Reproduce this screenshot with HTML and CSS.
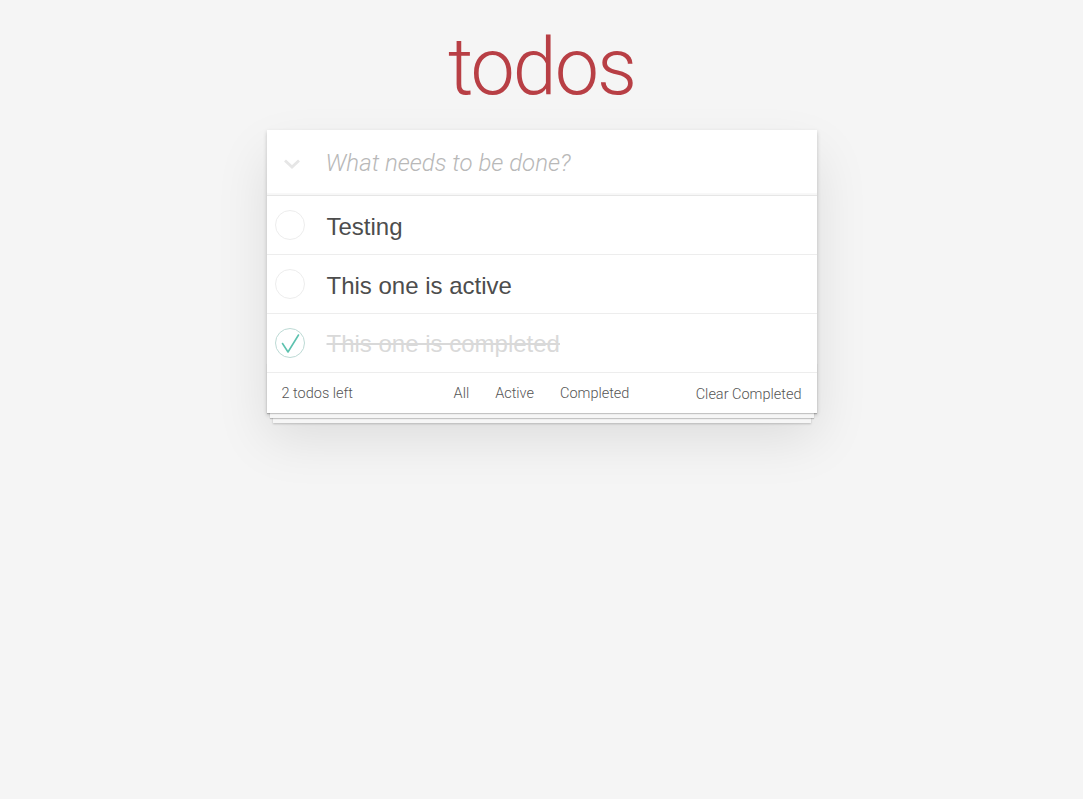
FILE: index.html
```html
<!DOCTYPE html>
<html lang="en">
<head>
<meta charset="utf-8">
<title>todos</title>
<link rel="stylesheet" href="styles.css">
</head>
<body>
<main class="page">
  <h1 class="title">todos</h1>
  <section class="todoapp">
    <header class="new-row">
      <span class="toggle-all">
        <svg width="16" height="10" viewBox="0 0 16 10"><path d="M1 1.5 L8 8 L15 1.5" fill="none" stroke="#e6e6e6" stroke-width="2.8" stroke-linejoin="miter"/></svg>
      </span>
      <span class="new-todo">What needs to be done?</span>
    </header>
    <ul class="todo-list">
      <li class="todo">
        <span class="toggle"></span>
        <span class="label">Testing</span>
      </li>
      <li class="todo">
        <span class="toggle"></span>
        <span class="label">This one is active</span>
      </li>
      <li class="todo completed">
        <span class="toggle done">
          <svg width="30" height="30" viewBox="0 0 30 30"><path d="M7.5 15.5 L13 24 L23.5 7" fill="none" stroke="#5dc2af" stroke-width="1.6" stroke-linecap="round" stroke-linejoin="round"/></svg>
        </span>
        <span class="label">This one is completed</span>
      </li>
    </ul>
    <footer class="footer">
      <span class="count">2 todos left</span>
      <nav class="filters">
        <a class="filter">All</a>
        <a class="filter">Active</a>
        <a class="filter">Completed</a>
      </nav>
      <span class="clear">Clear Completed</span>
    </footer>
  </section>
</main>
</body>
</html>
```

FILE: styles.css
```css
* { box-sizing: border-box; }

html, body {
  margin: 0;
  padding: 0;
}

body {
  background: #f5f5f5;
  font-family: "Liberation Sans", Arial, sans-serif;
  color: #4d4d4d;
  min-height: 100vh;
  -webkit-font-smoothing: antialiased;
}

.page {
  width: 550px;
  margin: 0 auto;
  padding-top: 27px;
  padding-bottom: 40px;
  display: flex;
  flex-direction: column;
}

.title {
  margin: 0 0 23px;
  height: 80px;
  font-family: Roboto, "Liberation Sans", sans-serif;
  font-weight: 300;
  font-size: 79px;
  letter-spacing: -2px;
  line-height: 80px;
  text-align: center;
  color: #b83f45;
}

.todoapp {
  position: relative;
  background: #fff;
  box-shadow: 0 2px 4px 0 rgba(0, 0, 0, 0.2), 0 25px 50px 0 rgba(0, 0, 0, 0.1);
}

.new-row {
  display: flex;
  align-items: center;
  height: 65px;
  box-shadow: inset 0 -2px 1px rgba(0, 0, 0, 0.03);
}

.toggle-all {
  width: 59px;
  flex: none;
  display: flex;
  padding-left: 17px;
  padding-top: 3px;
}

.toggle-all svg { display: block; }

.new-todo {
  font-family: Roboto, "Liberation Sans", sans-serif;
  font-weight: 300;
  font-style: italic;
  font-size: 24px;
  color: #b8b8b8;
}

.todo-list {
  list-style: none;
  margin: 0;
  padding: 0;
  border-top: 1px solid #e6e6e6;
}

.todo {
  display: flex;
  align-items: center;
  height: 59px;
  border-bottom: 1px solid #ededed;
}

.toggle {
  width: 30px;
  height: 30px;
  margin: 0 22px 0 8px;
  border-radius: 50%;
  border: 1px solid #ededed;
  flex: none;
}

.toggle.done {
  border-color: #bddad5;
}

.toggle svg {
  display: block;
  margin: -1px;
}

.label {
  font-size: 24px;
  line-height: 28px;
  color: #4d4d4d;
  padding-top: 3px;
}

.completed .label {
  color: #d9d9d9;
  text-decoration: line-through;
  padding-top: 1px;
}

.footer {
  position: relative;
  display: grid;
  grid-template-columns: 1fr auto 1fr;
  align-items: center;
  height: 40px;
  padding: 0 15px;
  font-family: Roboto, "Liberation Sans", sans-serif;
  font-weight: 300;
  font-size: 14.5px;
  color: #555;
}

.footer::before {
  content: "";
  position: absolute;
  right: 0;
  bottom: 0;
  left: 0;
  height: 50px;
  overflow: hidden;
  pointer-events: none;
  box-shadow: 0 1px 1px rgba(0, 0, 0, 0.2),
              0 8px 0 -3px #f6f6f6,
              0 9px 1px -3px rgba(0, 0, 0, 0.2),
              0 16px 0 -6px #f6f6f6,
              0 17px 2px -6px rgba(0, 0, 0, 0.2);
}

.count { justify-self: start; }

.filters {
  display: flex;
  gap: 10px;
}

.filter {
  padding: 3px 7px;
  border: 1px solid transparent;
  border-radius: 3px;
  color: inherit;
}

.clear { justify-self: end; padding-top: 2px; }
```
